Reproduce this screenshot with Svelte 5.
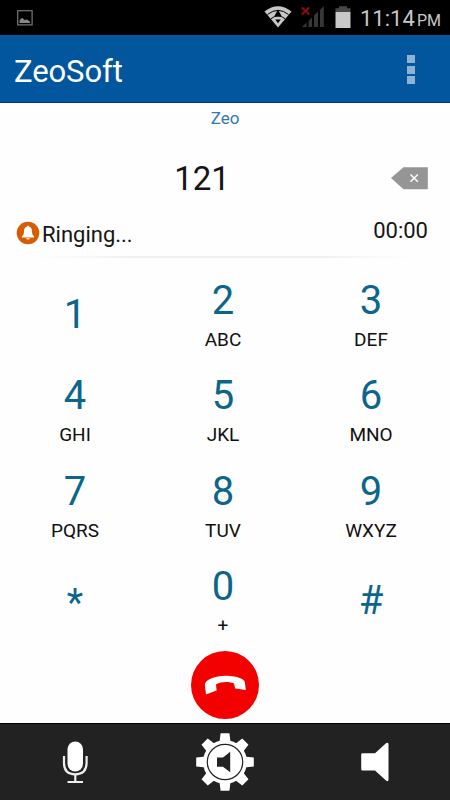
<script>
	let number = '121'
	let account = 'Zeo'
	let status = 'Ringing...'
	let duration = '00:00'

	const keys = [
		{ digit: '1' },
		{ digit: '2', letters: 'ABC' },
		{ digit: '3', letters: 'DEF' },
		{ digit: '4', letters: 'GHI' },
		{ digit: '5', letters: 'JKL' },
		{ digit: '6', letters: 'MNO' },
		{ digit: '7', letters: 'PQRS' },
		{ digit: '8', letters: 'TUV' },
		{ digit: '9', letters: 'WXYZ' },
		{ digit: '*' },
		{ digit: '0', letters: '+' },
		{ digit: '#' }
	]

	const press = (key) => {
		number = number + key.digit
	}

	const erase = () => {
		number = number.slice(0, -1)
	}
</script>

<main>
	<div class="status-bar">
		<svg class="picture" width="16" height="16" viewBox="0 0 16 16">
			<rect x="0.7" y="0.7" width="14.4" height="14.2" fill="none" stroke="#777" stroke-width="1.2" />
			<path d="M2.5 13V10.5L4 8.5L5.5 8L7.5 10L10 9.5L13 11.5V13Z" fill="#858585" />
		</svg>
		<svg class="wifi" width="28" height="22" viewBox="0 0 28 22">
			<path d="M0.5 5.5Q14 -5 27.5 5.5L14 21.5Z" fill="#c6c6c6" />
			<path d="M3.5 8.5Q14 0.2 24.5 8.5M7 12.7Q14 7 21 12.7" fill="none" stroke="#000" stroke-width="1" />
			<path d="M14 3.5L17.8 10.5H10.2ZM11.2 13.5H16.8L14 17.3Z" fill="#000" />
		</svg>
		<svg class="signal" width="24" height="22" viewBox="0 0 24 22">
			<path d="M1 21L5.5 16.5V21ZM7.5 21V15L11 11.5V21ZM13 21V9.5L17 5.5V21ZM19 21V4L22.8 0V21Z" fill="#373737" />
			<path d="M0.8 1.5L8.2 8.5M8.2 1.5L0.8 8.5" stroke="#8f0c0c" stroke-width="2" />
		</svg>
		<svg class="battery" width="16" height="23" viewBox="0 0 16 23">
			<path d="M0.5 6V2.2H4V0.3H12V2.2H15.5V6Z" fill="#484848" />
			<rect x="0.5" y="6" width="15" height="16" fill="#c8c8c8" />
		</svg>
		<span class="clock">11:14</span><span class="meridiem">PM</span>
	</div>

	<header>
		<h1>ZeoSoft</h1>
		<button class="menu" aria-label="Menu"><i></i><i></i><i></i></button>
	</header>

	<section class="call">
		<p class="account">{account}</p>
		<div class="number-row">
			<span class="number">{number}</span>
			<button class="erase" aria-label="Erase" on:click={erase}>
				<svg width="37" height="23" viewBox="0 0 37 23">
					<path d="M0 11L12.5 0.2H36.8V22.2H12.5Z" fill="#959595" />
					<path d="M19.5 7.5L26.8 14.8M26.8 7.5L19.5 14.8" stroke="#fff" stroke-width="1.5" />
				</svg>
			</button>
		</div>
		<div class="state-row">
			<svg width="24" height="24" viewBox="0 0 24 24">
				<circle cx="12" cy="12" r="11.3" fill="#d45d05" />
				<path d="M11.2 5.5Q11.2 4.5 12 4.5T12.8 5.5C15.2 6 16 8 16 10.3C16 13.2 16.5 14 18 15.2V16.4H6V15.2C7.5 14 8 13.2 8 10.3C8 8 8.8 6 11.2 5.5ZM10 17.2H14Q13.6 18.4 12 18.4T10 17.2Z" fill="#fff" />
			</svg>
			<span class="state">{status}</span>
			<span class="duration">{duration}</span>
		</div>
		<div class="divider"></div>
	</section>

	<div class="keypad">
		{#each keys as key}
			<button class="key" on:click={() => press(key)}>
				<span class="digit" class:star={key.digit === '*'}>{key.digit}</span>
				{#if key.letters}
					<span class="letters">{key.letters}</span>
				{/if}
			</button>
		{/each}
	</div>

	<button class="hang-up" aria-label="Hang up">
		<svg width="68" height="68" viewBox="0 0 68 68">
			<circle cx="34" cy="34" r="34" fill="#f30000" />
			<path d="M14 35.5C13.5 31.5 15 30 19 28C28 24 42 23.8 50 27.6C53 29 53.8 30.2 54 32.5L54.8 39L44.2 37.4L43 32.6C38 30.3 30 30.6 25 33.5L25.6 39.6L15 43.6Z" fill="#fff" />
		</svg>
	</button>

	<nav>
		<button class="mic" aria-label="Microphone">
			<svg width="28" height="46" viewBox="0 0 28 46">
				<rect x="6.5" y="1.5" width="15.5" height="30" rx="7.75" fill="#fff" />
				<path d="M3 16V23Q3 34.3 14.2 34.3T25.6 23V16" fill="none" stroke="#eee" stroke-width="2.2" />
				<path d="M14.3 34.5V42M6.5 42H22" fill="none" stroke="#eee" stroke-width="2.2" />
			</svg>
		</button>
		<button aria-label="Audio settings">
			<svg width="58" height="58" viewBox="-29 -29 58 58">
				{#each [0, 45, 90, 135, 180, 225, 270, 315] as angle}
					<path d="M-5.6 -19L-4.4 -28.8H4.4L5.6 -19Z" transform="rotate({angle})" fill="#fff" />
				{/each}
				<circle r="22" fill="#fff" />
				<circle r="17.7" fill="none" stroke="#222" stroke-width="1.2" />
				<path d="M-8 -4.5H-2L5.2 -10.2V10.2L-2 4.8H-8Z" fill="#222" />
			</svg>
		</button>
		<button aria-label="Speaker">
			<svg width="30" height="42" viewBox="0 0 30 42">
				<path d="M2.5 12.2H15L26 2.2Q28.5 0.7 28.5 3.2V38.4Q28.5 41.2 26 39.5L15 29.5H2.5Q1.2 29.5 1.2 28.2V13.5Q1.2 12.2 2.5 12.2Z" fill="#fff" />
			</svg>
		</button>
	</nav>
</main>

<style>
	:global(body) {
		margin: 0;
	}

	main {
		display: flex;
		flex-direction: column;
		width: 450px;
		height: 800px;
		overflow: hidden;
		background: #fefefe;
		color: #151515;
		font-family: Roboto, sans-serif;
	}

	button {
		padding: 0;
		border: none;
		background: none;
		color: inherit;
		font-family: inherit;
	}

	svg {
		display: block;
		flex: none;
	}

	h1, p {
		margin: 0;
		font-weight: 400;
	}

	.status-bar {
		display: flex;
		box-sizing: border-box;
		height: 35px;
		padding: 6px 8px 0 17px;
		background: #000;
		color: #c8c8c8;
	}
	.picture {
		margin-top: 4px;
	}
	.wifi {
		margin-left: 231px;
	}
	.signal {
		margin-left: 9px;
	}
	.battery {
		margin-left: 10px;
	}
	.clock {
		width: 57px;
		margin-left: 9px;
		font-size: 22px;
		line-height: 26px;
	}
	.meridiem {
		font-size: 16px;
		line-height: 30px;
	}

	header {
		display: flex;
		align-items: center;
		justify-content: space-between;
		box-sizing: border-box;
		height: 68px;
		padding: 2px 35px 0 14px;
		border-bottom: 1px solid #00308f;
		background: #01569d;
	}
	h1 {
		padding-top: 4px;
		color: #fff;
		font-size: 31px;
		letter-spacing: -0.1px;
	}
	.menu {
		display: flex;
		flex-direction: column;
		gap: 2.5px;
	}
	.menu i {
		width: 8px;
		height: 8px;
		background: #8db2d5;
	}

	.account {
		height: 54px;
		color: #2f7bb0;
		font-size: 17px;
		line-height: 30px;
		text-align: center;
	}
	.number-row {
		display: grid;
		grid-template-columns: 1fr auto;
		align-items: center;
		height: 43px;
		padding: 0 22px 0 15px;
	}
	.number {
		padding-right: 2px;
		font-size: 33px;
		text-align: center;
	}
	.state-row {
		display: flex;
		align-items: center;
		box-sizing: border-box;
		height: 56px;
		padding: 9px 22px 0 16px;
	}
	.state {
		margin-left: 2px;
		padding-top: 3px;
		font-size: 22px;
	}
	.duration {
		margin-left: auto;
		padding-bottom: 5px;
		font-size: 22px;
	}
	.divider {
		height: 2px;
		background: linear-gradient(to right, transparent 8%, #f0f0f0 30%, #f0f0f0 70%, transparent 92%);
	}

	.keypad {
		display: grid;
		grid-template-columns: repeat(3, 148px);
		grid-auto-rows: 95.3px;
		margin: 9px 0 0 1px;
	}
	.key {
		display: flex;
		flex-direction: column;
		align-items: center;
		justify-content: center;
		gap: 10px;
	}
	.digit {
		color: #0c668c;
		font-size: 40px;
		line-height: 40px;
	}
	.star {
		padding-top: 4px;
		font-size: 38px;
	}
	.letters {
		color: #101010;
		font-size: 19px;
		line-height: 17px;
	}

	.hang-up {
		align-self: center;
		margin-top: 3px;
	}

	nav {
		display: grid;
		grid-template-columns: repeat(3, 1fr);
		box-sizing: border-box;
		height: 77px;
		margin-top: auto;
		border-top: 1px solid #000;
		background: #222;
	}
	nav button {
		display: flex;
		align-items: center;
		justify-content: center;
	}
	.mic {
		padding-top: 2px;
	}
</style>
